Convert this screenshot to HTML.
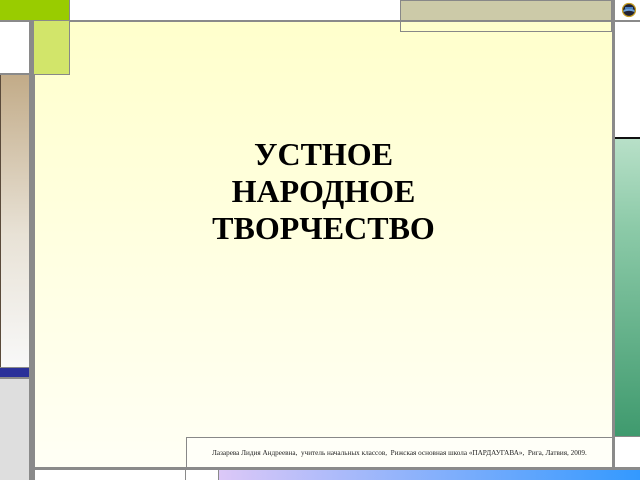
<!DOCTYPE html>
<html><head><meta charset="utf-8"><style>
body{margin:0;width:640px;height:480px;position:relative;overflow:hidden;background:#8a8a8a;font-family:"Liberation Serif",serif}
div{position:absolute;box-sizing:border-box}
</style></head><body>
<!-- top row -->
<div style="left:0;top:0;width:69px;height:20px;background:#99cc00"></div>
<div style="left:70px;top:0;width:330px;height:20px;background:#fff"></div>
<div style="left:400px;top:0;width:212px;height:21px;background:#cccaa8;border:1px solid #888"></div>
<div style="left:615px;top:0;width:25px;height:20px;background:#fff"></div>
<svg style="position:absolute;left:621px;top:2px" width="16" height="16"><circle cx="8" cy="8" r="7" fill="#223"/><circle cx="8" cy="8" r="6.5" fill="none" stroke="#c9a020" stroke-width="1.2"/><path d="M2.5 8 Q8 5 13.5 8 L13.5 10 Q8 7.5 2.5 10Z" fill="#6aa0d8"/><rect x="4" y="5" width="8" height="2" fill="#4a80c0"/></svg>
<!-- left column -->
<div style="left:0;top:22px;width:29px;height:51px;background:#fff"></div>
<div style="left:0;top:75px;width:29px;height:292px;background:linear-gradient(#c2ab88,#e8e2d6 55%,#f8f8f8);border-left:1px solid #5a4a3a"></div>
<div style="left:0;top:368px;width:29px;height:9px;background:#2a3099"></div>
<div style="left:0;top:379px;width:29px;height:101px;background:#dedede"></div>
<!-- main -->
<div style="left:35px;top:22px;width:577px;height:445px;background:linear-gradient(#ffffcc,#fffff5)"></div>
<div style="left:34px;top:21px;width:36px;height:54px;background:#d2e56a;border:1px solid #888;border-top:none;border-left:none"></div>
<div style="left:400px;top:20px;width:212px;height:12px;border:1px solid #888;border-top:none"></div>
<div style="left:35px;top:136px;width:577px;text-align:center;font-weight:bold;font-size:32px;line-height:37px;color:#000">УСТНОЕ<br>НАРОДНОЕ<br>ТВОРЧЕСТВО</div>
<!-- footer -->
<div style="left:186px;top:437px;width:426px;height:30px;background:#fffff8;border:1px solid #888;border-right:none;border-bottom:none;font-size:7.2px;line-height:30px;padding-left:25px;white-space:nowrap;color:#222">Лазарева Лидия Андреевна,&nbsp; учитель начальных классов, &nbsp;Рижская основная школа «ПАРДАУГАВА», &nbsp;Рига, Латвия, 2009.</div>
<!-- right column -->
<div style="left:615px;top:22px;width:25px;height:115px;background:#fff"></div>
<div style="left:615px;top:137px;width:25px;height:2px;background:#111"></div>
<div style="left:615px;top:139px;width:25px;height:297px;background:linear-gradient(#b8e0c8,#8ccaa8 30%,#3f9a6e)"></div>
<div style="left:615px;top:437px;width:25px;height:30px;background:#fff"></div>
<!-- bottom row -->
<div style="left:35px;top:470px;width:150px;height:10px;background:#fff"></div>
<div style="left:186px;top:470px;width:32px;height:10px;background:#fff"></div>
<div style="left:219px;top:470px;width:421px;height:10px;background:linear-gradient(90deg,#dcc8f8,#3399ff)"></div>
</body></html>
